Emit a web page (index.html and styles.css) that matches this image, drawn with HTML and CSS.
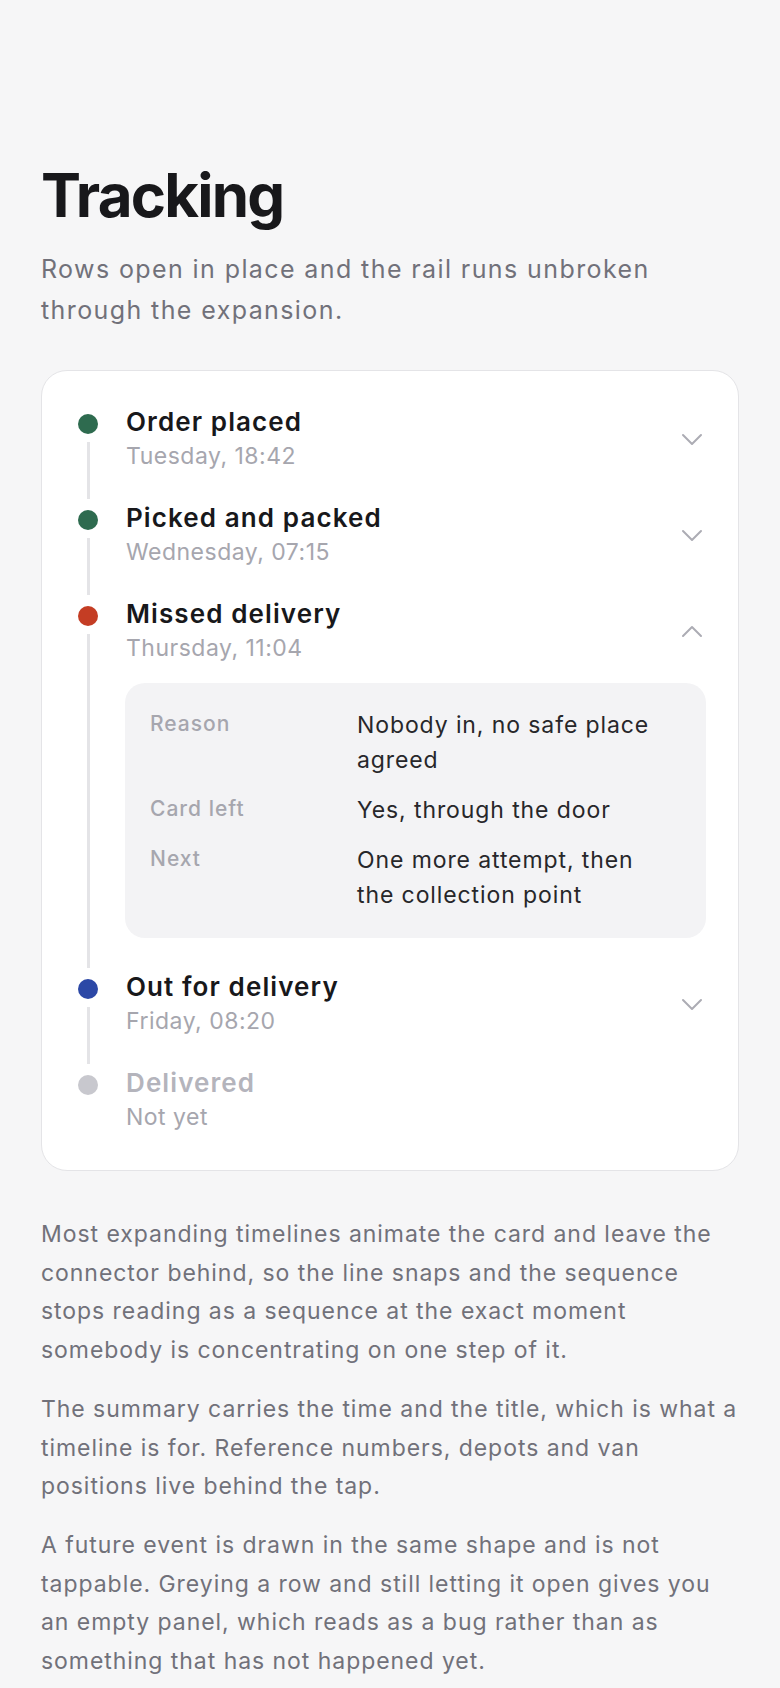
FILE: index.html
```html
<!DOCTYPE html>
<html lang="en">
<head>
  <meta charset="UTF-8" />
  <meta name="viewport" content="width=device-width, initial-scale=1.0" />
  <title>Tracking</title>
  <link rel="stylesheet" href="styles.css">
</head>
<body>
  <main class="page">
    <h1>Tracking</h1>
    <p class="lede">Rows open in place and the rail runs unbroken through the expansion.</p>

    <section class="timeline">
      <div class="step">
        <div class="rail"><span class="dot green"></span><span class="line"></span></div>
        <div class="summary">
          <div class="title">Order placed</div>
          <div class="time">Tuesday, 18:42</div>
        </div>
        <svg class="chev" viewBox="0 0 24 24"><path d="M3 8l9 9 9-9" /></svg>
      </div>

      <div class="step">
        <div class="rail"><span class="dot green"></span><span class="line"></span></div>
        <div class="summary">
          <div class="title">Picked and packed</div>
          <div class="time">Wednesday, 07:15</div>
        </div>
        <svg class="chev" viewBox="0 0 24 24"><path d="M3 8l9 9 9-9" /></svg>
      </div>

      <div class="step open">
        <div class="rail"><span class="dot red"></span><span class="line"></span></div>
        <div class="summary">
          <div class="title">Missed delivery</div>
          <div class="time">Thursday, 11:04</div>
        </div>
        <svg class="chev" viewBox="0 0 24 24"><path d="M3 17l9-9 9 9" /></svg>
        <dl class="panel">
          <dt>Reason</dt>
          <dd>Nobody in, no safe place agreed</dd>
          <dt>Card left</dt>
          <dd>Yes, through the door</dd>
          <dt>Next</dt>
          <dd>One more attempt, then the collection point</dd>
        </dl>
      </div>

      <div class="step">
        <div class="rail"><span class="dot blue"></span><span class="line"></span></div>
        <div class="summary">
          <div class="title">Out for delivery</div>
          <div class="time">Friday, 08:20</div>
        </div>
        <svg class="chev" viewBox="0 0 24 24"><path d="M3 8l9 9 9-9" /></svg>
      </div>

      <div class="step future">
        <div class="rail"><span class="dot grey"></span></div>
        <div class="summary">
          <div class="title">Delivered</div>
          <div class="time">Not yet</div>
        </div>
      </div>
    </section>

    <p class="note">Most expanding timelines animate the card and leave the connector behind, so the line snaps and the sequence stops reading as a sequence at the exact moment somebody is concentrating on one step of it.</p>
    <p class="note">The summary carries the time and the title, which is what a timeline is for. Reference numbers, depots and van positions live behind the tap.</p>
    <p class="note">A future event is drawn in the same shape and is not tappable. Greying a row and still letting it open gives you an empty panel, which reads as a bug rather than as something that has not happened yet.</p>
  </main>
</body>
</html>
```

FILE: styles.css
```css
:root {
  --bg: #f6f6f7;
  --ink: #18181b;
  --muted: #71717a;
  --faint: #a6a6ae;
  --rule: #e4e4e7;
}
body {
  margin: 0;
  background: var(--bg);
  color: var(--ink);
  font-family: Inter, "Liberation Sans", sans-serif;
}
.page { padding: 162px 41px 40px; }

h1 {
  margin: 0;
  font-size: 60px;
  line-height: 66px;
  font-weight: 700;
  letter-spacing: -0.03em;
}
.lede {
  margin: 21px 0 39px;
  font-size: 25px;
  line-height: 41px;
  letter-spacing: 1.4px;
  color: var(--muted);
}

.timeline {
  background: #fff;
  border: 1.5px solid var(--rule);
  border-radius: 26px;
  padding: 20px 34px 22px 28px;
}
.step {
  display: grid;
  grid-template-columns: 36px 1fr 24px;
  column-gap: 20px;
}
.rail {
  grid-column: 1;
  grid-row: 1 / span 2;
  display: flex;
  flex-direction: column;
  align-items: center;
}
.dot {
  width: 20px;
  height: 20px;
  border-radius: 50%;
  margin-top: 23px;
  flex: none;
}
.dot.green { background: #2e6b4f; }
.dot.red { background: #c43d24; }
.dot.blue { background: #2c48a6; }
.dot.grey { background: #c8c8ce; }
.line {
  flex: 1;
  width: 3px;
  background: var(--rule);
  margin: 8px 0 -12px;
}
.summary {
  grid-column: 2;
  grid-row: 1;
  padding: 14px 0;
}
.title {
  font-size: 26px;
  line-height: 34px;
  font-weight: 600;
  letter-spacing: 1.1px;
}
.time {
  font-size: 23px;
  line-height: 34px;
  letter-spacing: 0.5px;
  color: var(--faint);
}
.future .title { color: #b4b4bc; }
.chev {
  grid-column: 3;
  grid-row: 1;
  width: 24px;
  height: 24px;
  align-self: center;
  fill: none;
  stroke: #acacb4;
  stroke-width: 2;
  stroke-linecap: round;
  stroke-linejoin: round;
}

.panel {
  grid-column: 2 / 4;
  grid-row: 2;
  margin: 4px -2px 18px -1px;
  padding: 25px;
  background: #f3f3f5;
  border-radius: 20px;
  display: grid;
  grid-template-columns: 190px 1fr;
  column-gap: 17px;
  row-gap: 15px;
}
.panel dt {
  font-size: 21px;
  line-height: 32px;
  font-weight: 500;
  letter-spacing: 1px;
  color: var(--faint);
}
.panel dd {
  margin: 0;
  max-width: 305px;
  font-size: 23px;
  line-height: 35px;
  letter-spacing: 0.9px;
  color: #27272a;
}

.note {
  margin: 0 0 20px;
  font-size: 23px;
  line-height: 38.7px;
  letter-spacing: 0.95px;
  color: var(--muted);
}
.timeline + .note { margin-top: 44px; }
```
